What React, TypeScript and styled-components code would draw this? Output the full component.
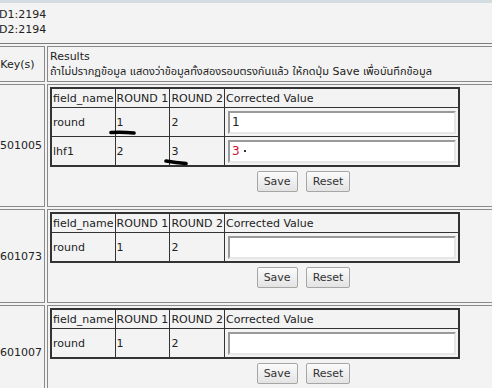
import React from "react";
import styled, { createGlobalStyle } from "styled-components";

const GlobalStyle = createGlobalStyle`
  html, body {
    margin: 0;
    padding: 0;
    overflow: hidden;
    background: #f3f3f3;
  }
  body {
    font-family: "DejaVu Sans", "Noto Sans", "Noto Sans Thai", sans-serif;
    font-size: 11px;
    color: #222;
  }
`;

const TopStrip = styled.div`
  height: 3px;
  background: #d3dde1;
`;

const Info = styled.div`
  margin: 4px 0 0 -1px;
  line-height: 15px;
`;

const Shift = styled.div`
  width: 620px;
  margin-left: -13px;
`;

const OuterTable = styled.table`
  width: 576px;
  margin-top: 6px;
  border: 1px solid #7c7c7c;
  border-collapse: separate;
  border-spacing: 2px;
`;

const KeyCell = styled.td`
  width: 49px;
  padding: 2px;
  border: 1px solid #8a8a8a;
  text-align: center;
  vertical-align: middle;
  white-space: nowrap;
  line-height: 15px;
`;

const ResultCell = styled.td`
  width: 507px;
  padding: 2px;
  border: 1px solid #8a8a8a;
  vertical-align: top;
  line-height: 15px;
  white-space: nowrap;
`;

const Form = styled.form`
  margin: 0 0 12px;
`;

const FieldTable = styled.table`
  width: 410px;
  border: 2px solid #333;
  border-collapse: collapse;
`;

const Th = styled.th<{ $w?: number }>`
  ${(p) => (p.$w ? `width: ${p.$w}px;` : "")}
  height: 18px;
  padding: 0 1px;
  border: 1px solid #333;
  font-weight: normal;
  text-align: left;
  white-space: nowrap;
`;

const Td = styled.td`
  position: relative;
  height: 28px;
  padding: 0 1px;
  border: 1px solid #333;
  white-space: nowrap;
`;

const ValueTd = styled(Td)`
  padding: 0 2px 0 3px;
`;

const ValueInput = styled.input<{ $error?: boolean }>`
  display: block;
  box-sizing: border-box;
  width: 228px;
  height: 23px;
  margin: 0;
  padding: 0 2px;
  border-style: solid;
  border-width: 2px;
  border-color: #9a9a9a #e6e6e6 #e6e6e6 #9a9a9a;
  background: #fff;
  font: inherit;
  font-size: 12px;
  color: ${(p) => (p.$error ? "#d0102a" : "#222")};
  outline: none;
`;

const Dot = styled.span`
  position: absolute;
  left: 19px;
  top: 13px;
  width: 2px;
  height: 2px;
  background: #333;
  pointer-events: none;
`;

const Buttons = styled.div`
  display: flex;
  justify-content: center;
  gap: 8px;
  margin-top: 4px;
`;

const Button = styled.button`
  height: 21px;
  padding: 0 6px;
  border: 1px solid #a6a6a6;
  border-radius: 2px;
  background: linear-gradient(#fbfbfb, #e3e3e3);
  font: inherit;
  font-size: 11px;
  color: #333;
`;

const Mark = styled.svg`
  position: absolute;
  pointer-events: none;
`;

type Row = {
  field: string;
  r1: string;
  r2: string;
  value: string;
  error?: boolean;
  mark?: "r1" | "r2";
};

type Record = { key: string; rows: Row[] };

const records: Record[] = [
  {
    key: "2501005",
    rows: [
      { field: "round", r1: "1", r2: "2", value: "1", mark: "r1" },
      { field: "lhf1", r1: "2", r2: "3", value: "3", error: true, mark: "r2" },
    ],
  },
  { key: "2601073", rows: [{ field: "round", r1: "1", r2: "2", value: "" }] },
  { key: "2601007", rows: [{ field: "round", r1: "1", r2: "2", value: "" }] },
];

const Scribble: React.FC<{ tilt?: boolean }> = ({ tilt }) => (
  <Mark
    width="28"
    height="9"
    viewBox="0 0 28 9"
    style={{ left: tilt ? -6 : -7, top: tilt ? 21 : 20 }}
  >
    <path
      d={tilt ? "M2 3 C 8 4, 16 5, 22 5.5" : "M2 4.5 C 9 4, 17 4.2, 25 5"}
      stroke="#000"
      strokeWidth="3.6"
      strokeLinecap="round"
      fill="none"
    />
  </Mark>
);

const App: React.FC = () => {
  return (
    <>
      <GlobalStyle />
      <TopStrip />
      <Info>
        <div>D1:2194</div>
        <div>D2:2194</div>
      </Info>
      <Shift>
        <OuterTable>
          <tbody>
            <tr>
              <KeyCell>Key(s)</KeyCell>
              <ResultCell>
                Results
                <br />
                ถ้าไม่ปรากฏข้อมูล แสดงว่าข้อมูลทั้งสองรอบตรงกันแล้ว ให้กดปุ่ม Save
                เพื่อบันทึกข้อมูล
              </ResultCell>
            </tr>
            {records.map((rec) => (
              <tr key={rec.key}>
                <KeyCell>{rec.key}</KeyCell>
                <ResultCell>
                  <Form onSubmit={(e) => e.preventDefault()}>
                    <FieldTable>
                      <tbody>
                        <tr>
                          <Th $w={62}>field_name</Th>
                          <Th $w={54}>ROUND 1</Th>
                          <Th $w={52}>ROUND 2</Th>
                          <Th>Corrected Value</Th>
                        </tr>
                        {rec.rows.map((row) => (
                          <tr key={row.field}>
                            <Td>{row.field}</Td>
                            <Td>
                              {row.r1}
                              {row.mark === "r1" && <Scribble />}
                            </Td>
                            <Td>
                              {row.r2}
                              {row.mark === "r2" && <Scribble tilt />}
                            </Td>
                            <ValueTd>
                              <ValueInput
                                defaultValue={row.value}
                                $error={row.error}
                              />
                              {row.error && <Dot />}
                            </ValueTd>
                          </tr>
                        ))}
                      </tbody>
                    </FieldTable>
                    <Buttons>
                      <Button type="submit">Save</Button>
                      <Button type="reset">Reset</Button>
                    </Buttons>
                  </Form>
                </ResultCell>
              </tr>
            ))}
          </tbody>
        </OuterTable>
      </Shift>
    </>
  );
};

export default App;
